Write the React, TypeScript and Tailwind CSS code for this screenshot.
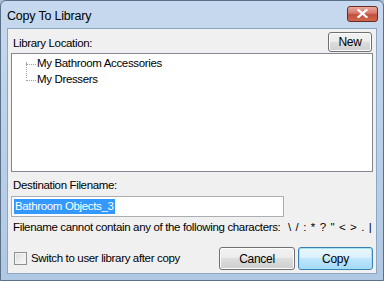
import React from "react";

const font = { fontFamily: '"Liberation Sans", Arial, sans-serif' };

function Btn({ children, w, h, focused }: { children: React.ReactNode; w: string; h: string; focused?: boolean }) {
  return (
    <div
      className={`${w} ${h} rounded-[3px] border flex items-center justify-center text-[12px] tracking-[-0.3px] text-black ${
        focused
          ? "border-[#3c7fb1] bg-[linear-gradient(#eaf6fd_0%,#d9f0fc_50%,#bee6fd_50%,#a7d9f5_100%)] shadow-[inset_0_0_0_1px_#9fe3f5]"
          : "border-[#707070] bg-[linear-gradient(#f2f2f2_0%,#ebebeb_50%,#dddddd_50%,#cfcfcf_100%)] shadow-[inset_0_0_0_1px_#fcfcfc]"
      }`}
    >
      {children}
    </div>
  );
}

export default function App() {
  return (
    <div className="w-[384px] h-[281px] bg-[#a8c0dc] p-0" style={font}>
      <div className="w-[384px] h-[281px] rounded-t-[6px] border border-[#5a6f88] bg-[linear-gradient(#c7d9ee_0%,#bcd1ea_40%,#b1c8e4_100%)] flex flex-col">
        <div className="h-[27px] flex items-center justify-between pl-[6px] pr-[5px]">
          <span className="text-[12.5px] text-black mt-[3px] tracking-[-0.2px]">Copy To Library</span>
          <div className="w-[31px] h-[16px] -mt-[2px] rounded-[3px] border border-[#6b2b23] bg-[linear-gradient(#e9a99c_0%,#d7766a_45%,#c14e3c_55%,#cf6a4e_100%)] flex items-center justify-center">
            <svg width="11" height="9" viewBox="0 0 11 9">
              <path d="M1.5 1 L9.5 8 M9.5 1 L1.5 8" stroke="#ffffff" strokeWidth="2.2" strokeLinecap="square" />
            </svg>
          </div>
        </div>
        <div className="flex-1 mx-[6px] mb-[6px] border border-[#8ca6c4] bg-[#f0f0f0] px-[3px] pt-[3px] flex flex-col text-[11.5px] tracking-[-0.35px] text-black whitespace-nowrap">
          <div className="flex items-start justify-between pr-[1px] h-[21px]">
            <span className="ml-[2px] mt-[3px] leading-[16px]">Library Location:</span>
            <Btn w="w-[44px]" h="h-[20px]">New</Btn>
          </div>
          <div className="h-[119px] border border-[#828790] bg-white pl-[13px] pt-[2px] pr-0">
            <div className="relative">
              <div className="absolute left-[1px] top-[6px] h-[16px] border-l border-dotted border-[#a0a0a0]" />
              <div className="flex items-center h-[16px]">
                <div className="w-[10px] border-t border-dotted border-[#a0a0a0] ml-[1px]" />
                <span className="ml-[1px]">My Bathroom Accessories</span>
              </div>
              <div className="flex items-center h-[16px]">
                <div className="w-[10px] border-t border-dotted border-[#a0a0a0] ml-[1px]" />
                <span className="ml-[1px]">My Dressers</span>
              </div>
            </div>
          </div>
          <div className="mt-[5px] ml-[2px] h-[16px] leading-[16px]">Destination Filename:</div>
          <div className="mt-[3px] w-[273px] h-[21px] border border-[#abadb3] bg-white flex items-center pl-[2px]">
            <span className="bg-[#3399ff] text-white leading-[15px] px-[1px]">Bathroom Objects_3</span>
          </div>
          <div className="mt-[2px] ml-[2px] flex h-[16px] leading-[16px]">
            <span className="w-[275px]">Filename cannot contain any of the following characters:</span>
            <span className="tracking-[0.6px]">{'\\ / : * ? " < > . |'}</span>
          </div>
          <div className="mt-[12px] flex items-center">
            <div className="ml-[3px] w-[13px] h-[13px] border border-[#8e8f8f] bg-[linear-gradient(135deg,#dcdcdc,#fafafa)] shadow-[inset_0_0_0_1px_#f4f4f4]" />
            <span className="ml-[4px]">Switch to user library after copy</span>
            <div className="ml-auto flex gap-[3px]">
              <Btn w="w-[76px]" h="h-[23px]">Cancel</Btn>
              <Btn w="w-[75px]" h="h-[23px]" focused>Copy</Btn>
            </div>
          </div>
        </div>
      </div>
    </div>
  );
}
